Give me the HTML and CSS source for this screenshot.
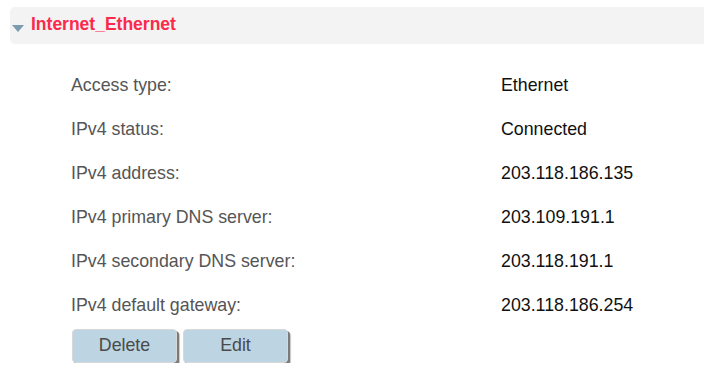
FILE: index.html
```html
<!DOCTYPE html>
<html lang="en">
<head>
    <meta charset="UTF-8">
    <title>Internet_Ethernet</title>
    <link rel="stylesheet" href="styles.css">
</head>
<body>
    <div class="panelHead">
        <span class="arrow"></span>
        <p class="panelTitle">Internet_Ethernet</p>
    </div>
    <section class="infoList">
        <div class="infoRow"><span class="infoLabel">Access type:</span><span class="infoValue">Ethernet</span></div>
        <div class="infoRow"><span class="infoLabel">IPv4 status:</span><span class="infoValue">Connected</span></div>
        <div class="infoRow"><span class="infoLabel">IPv4 address:</span><span class="infoValue">203.118.186.135</span></div>
        <div class="infoRow"><span class="infoLabel">IPv4 primary DNS server:</span><span class="infoValue">203.109.191.1</span></div>
        <div class="infoRow"><span class="infoLabel">IPv4 secondary DNS server:</span><span class="infoValue">203.118.191.1</span></div>
        <div class="infoRow"><span class="infoLabel">IPv4 default gateway:</span><span class="infoValue">203.118.186.254</span></div>
    </section>
    <div class="btnCover">
        <button class="grayBtn">Delete</button>
        <button class="grayBtn">Edit</button>
    </div>
</body>
</html>
```
FILE: styles.css
```css
*{
    margin: 0; padding: 0;
    box-sizing: border-box;
}
body{
    font-family: "Liberation Sans", Arial, sans-serif;
    font-size: 17.8px;
    background-color: #fff;
}
.panelHead{
    margin: 7px 0 0 10px;
    height: 37px;
    background-color: #f3f3f3;
    border-radius: 5px 0 0 5px;
    display: flex;
    align-items: center;
    padding-left: 2px;
    gap: 7px;
}
.arrow{
    width: 0; height: 0;
    border-left: 6px solid transparent;
    border-right: 6px solid transparent;
    border-top: 7px solid #7b9bb0;
    margin-top: 5px;
}
.panelTitle{
    color: #fb2a4c;
    font-weight: bold;
    font-size: 17.5px;
    padding-bottom: 3px;
}
.infoList{
    margin-top: 19px;
    padding-left: 71px;
}
.infoRow{
    display: grid;
    grid-template-columns: 430px auto;
    height: 44px;
    line-height: 44px;
}
.infoLabel{
    color: #555;
}
.infoValue{
    color: #111;
}
.btnCover{
    margin-top: 2px;
    padding-left: 72px;
    display: flex;
    gap: 6px;
}
.grayBtn{
    width: 105px;
    height: 34px;
    font-family: "Liberation Sans", Arial, sans-serif;
    font-size: 17.8px;
    color: #4a4a4a;
    background-color: #bdd4e2;
    border: 1px solid #d8d8d8;
    border-radius: 4px;
    box-shadow: 2px 2px 0 #7a7a7a, 3px 3px 1px #c8c8c8;
    padding-bottom: 1px;
}
```
